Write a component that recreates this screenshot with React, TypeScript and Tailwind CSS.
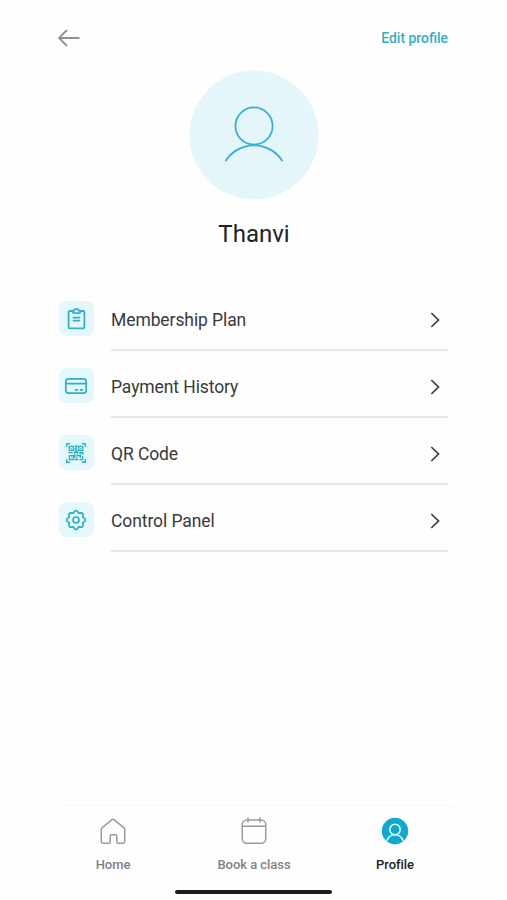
import type { ReactNode } from 'react';

const ClipboardIcon = () => (
  <svg width="19" height="22" viewBox="0 0 19 22" fill="none" stroke="currentColor" strokeWidth="1.8" strokeLinecap="round" strokeLinejoin="round">
    <path d="M5.5 3H3A1.4 1.4 0 0 0 1.6 4.4V19A1.4 1.4 0 0 0 3 20.4h13A1.4 1.4 0 0 0 17.4 19V4.4A1.4 1.4 0 0 0 16 3h-2.5" />
    <path d="M5.5 2.6h1.8a2.3 2.3 0 0 1 4.4 0h1.8v1a1.6 1.6 0 0 1-1.6 1.6H7.1a1.6 1.6 0 0 1-1.6-1.6z" />
    <path d="M6.5 9.6h6M6.5 12.6h6" />
  </svg>
);

const CardIcon = () => (
  <svg width="24" height="18" viewBox="0 0 24 18" fill="none" stroke="currentColor" strokeWidth="1.7" strokeLinecap="round">
    <rect x="1.8" y="1.8" width="20.4" height="14.4" rx="2.6" />
    <path d="M2 6.6h20" />
    <path d="M11.5 12.8h2M16.5 12.8h2" />
  </svg>
);

const QrIcon = () => (
  <svg width="20" height="20" viewBox="0 0 20 20" fill="none" stroke="currentColor" strokeWidth="1.4">
    <path d="M.7 4V.7H4M16 .7h3.3V4M19.3 16v3.3H16M4 19.3H.7V16" />
    <path d="M3.4 3.4h4v4h-4zM12.6 3.4h4v4h-4zM3.4 12.6h4v4h-4z" />
    <path d="M9 3h2.5M10 3.5v4M8.6 6h1.4M9 8h2.5M2.6 9.5h4M7.5 9.3h4v2.3M13 9.5h4.3M14.5 9.5v2M16.8 9v2.8M8.8 10.5v4.5M10.4 12.8h4v2.2M8.6 16.6h3.8M13.6 16.6h3.6M16.6 13v4M10.6 14.6v2" />
    <path d="M5 5.4h.9M14.2 5.4h.9M5 14.6h.9" />
  </svg>
);

const GearIcon = () => (
  <svg width="22" height="22" viewBox="0 0 22 22" fill="none" stroke="currentColor" strokeWidth="1.7" strokeLinejoin="round">
    <path d="M9.9 2Q11 1.1 12.1 2L13.8 4.2 16.5 3.9Q18 4 18.1 5.5L17.8 8.2 20 9.9Q20.900 11 20 12.100L17.800 13.800 18.100 16.500Q18 18 16.500 18.100L13.800 17.800 12.100 20Q11 20.900 9.900 20L8.200 17.800 5.500 18.100Q4 18 3.900 16.500L4.200 13.800 2 12.100Q1.100 11 2 9.900L4.200 8.200 3.900 5.500Q4 4 5.500 3.900L8.200 4.200Z" />
    <circle cx="11" cy="11" r="3" />
  </svg>
);

const menuItems: { label: string; icon: ReactNode }[] = [
  { label: 'Membership Plan', icon: <ClipboardIcon /> },
  { label: 'Payment History', icon: <CardIcon /> },
  { label: 'QR Code', icon: <QrIcon /> },
  { label: 'Control Panel', icon: <GearIcon /> },
];

function MenuRow({ label, icon }: { label: string; icon: ReactNode }) {
  return (
    <button className="flex h-[67px] w-full text-left">
      <span className="mt-[17px] mr-[17px] flex size-[35px] shrink-0 items-center justify-center rounded-lg bg-[#e4f7fb] pr-px text-[#2bb0c4]">
        {icon}
      </span>
      <span className="flex h-full flex-1 items-center justify-between border-b-2 border-[#e6e6e6] pt-[6px] pr-2">
        <span className="pt-[2px] text-[17.5px] tracking-[-0.09px] text-[#3a3a3a]">{label}</span>
        <svg width="10" height="16" viewBox="0 0 10 16" fill="none" stroke="#3c3c3c" strokeWidth="1.7">
          <path d="M1.3 1 8.5 8l-7.2 7" />
        </svg>
      </span>
    </button>
  );
}

function NavItem({ label, icon, active }: { label: string; icon: ReactNode; active?: boolean }) {
  return (
    <button className="flex w-[141px] flex-col items-center">
      {icon}
      <span className={`mt-2.5 pl-px text-[13px] leading-5 font-medium tracking-[-0.05px] ${active ? 'text-[#222]' : 'text-[#828282]'}`}>
        {label}
      </span>
    </button>
  );
}

export default function App() {
  return (
    <div className="flex h-[900px] w-[507px] flex-col bg-[#fefefe] font-['Roboto',sans-serif]">
      {/* Header */}
      <header className="flex h-[70px] items-start justify-between pt-7 pr-[59px] pl-[58px]">
        <button aria-label="Back">
          <svg width="22" height="20" viewBox="0 0 22 20" fill="none" stroke="#929295" strokeWidth="1.8">
            <path d="M21.5 10h-20M9 2l-8 8 8 8" />
          </svg>
        </button>
        <button className="text-[13.9px] leading-[21px] font-medium text-[#35adbd]">Edit profile</button>
      </header>

      {/* Avatar */}
      <section className="flex h-[214px] flex-col items-center">
        <svg width="130" height="130" viewBox="0 0 130 130" fill="none" stroke="#37b1d2" strokeWidth="1.8">
          <circle cx="65" cy="65" r="64.5" fill="#e4f6fa" stroke="none" />
          <circle cx="65" cy="56" r="18.6" />
          <path d="M36.5 91.2a33.5 33.5 0 0 1 57 0" />
        </svg>
        <h1 className="mt-[18px] pl-px text-2xl text-[#222]">Thanvi</h1>
      </section>

      {/* Menu */}
      <main className="flex-1 px-[59px]">
        {menuItems.map((item) => (
          <MenuRow key={item.label} {...item} />
        ))}
      </main>

      {/* Bottom navigation */}
      <nav className="mx-[42px] flex h-[95px] flex-col items-center justify-between rounded-t-[20px] border-t border-[#f6f6f6] pb-1.5">
        <div className="flex pt-[11px]">
          <NavItem
            label="Home"
            icon={
              <svg width="28" height="28" viewBox="0 0 28 28" fill="none" stroke="#9a9a9a" strokeWidth="1.5" strokeLinejoin="round">
                <path d="M2.3 12.2c0-.6.2-1 .7-1.4L13 2.6c.6-.5 1.4-.5 2 0l10 8.2c.5.4.7.8.7 1.4v12.3a1.7 1.7 0 0 1-1.7 1.7h-5a1.2 1.2 0 0 1-1.2-1.2v-5.8a1.4 1.4 0 0 0-1.4-1.4h-3.8a1.4 1.4 0 0 0-1.4 1.4V25a1.2 1.2 0 0 1-1.2 1.2H4a1.7 1.7 0 0 1-1.7-1.7z" />
              </svg>
            }
          />
          <NavItem
            label="Book a class"
            icon={
              <svg width="28" height="28" viewBox="0 0 28 28" fill="none" stroke="#9a9a9a" strokeWidth="1.5">
                <rect x="2.3" y="3" width="23.4" height="23.2" rx="4.5" />
                <path d="M2.3 9.3h23.4M8 .5v5M20 .5v5" />
              </svg>
            }
          />
          <NavItem
            label="Profile"
            active
            icon={
              <svg width="28" height="28" viewBox="0 0 28 28" fill="none" stroke="#e9fbff" strokeWidth="1.5">
                <circle cx="14" cy="14" r="13.2" fill="#10a9cd" stroke="none" />
                <circle cx="14" cy="12.5" r="5.2" />
                <path d="M6 23.8c1.3-4 4.3-6 8-6s6.7 2 8 6" />
              </svg>
            }
          />
        </div>
        <div className="h-1 w-[157px] rounded-full bg-[#1c1c1c]" />
      </nav>
    </div>
  );
}
